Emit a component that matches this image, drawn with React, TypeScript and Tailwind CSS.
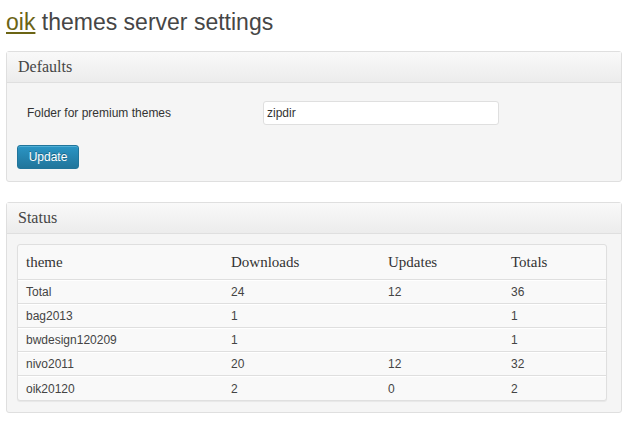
import React from "react";

const rows = [
  ["Total", "24", "12", "36"],
  ["bag2013", "1", "", "1"],
  ["bwdesign120209", "1", "", "1"],
  ["nivo2011", "20", "12", "32"],
  ["oik20120", "2", "0", "2"],
];

function Panel({ title, children }: { title: string; children: React.ReactNode }) {
  return (
    <div className="rounded-[3px] border border-[#dfdfdf] bg-[#f5f5f5] shadow-[inset_0_1px_0_#fff]">
      <div className="flex h-[31px] items-center border-b border-[#dfdfdf] bg-gradient-to-b from-[#f9f9f9] to-[#ececec] pl-[11px] pr-[10px] font-['Liberation_Serif',serif] text-[16px] text-[#464646]">
        {title}
      </div>
      {children}
    </div>
  );
}

export default function App() {
  return (
    <div className="min-h-screen bg-white pl-[6px] pr-[20px] font-['Liberation_Sans',Arial,sans-serif] text-[12px] text-[#333]">
      <h2 className="pt-[8px] text-[23px] leading-[29px] text-[#464646]">
        <a href="#" className="text-[#6b6414] underline">oik</a> themes server settings
      </h2>

      <div className="mt-[14px]">
        <Panel title="Defaults">
          <div className="px-[10px] pt-[18px] pb-[12px]">
            <div className="flex items-center">
              <label className="w-[246px] pl-[10px] text-[#333]">Folder for premium themes</label>
              <input
                defaultValue="zipdir"
                className="h-[24px] w-[236px] rounded-[3px] border border-[#dfdfdf] bg-white px-[3px] text-[12px] text-[#333] outline-none"
              />
            </div>
            <button className="mt-[20px] h-[24px] w-[62px] rounded-[3px] border border-[#21759b] bg-gradient-to-b from-[#2a95c5] to-[#21759b] text-[12px] text-white [text-shadow:0_-1px_0_rgba(0,0,0,0.3)] shadow-[inset_0_1px_0_rgba(120,200,230,0.5)]">
              Update
            </button>
          </div>
        </Panel>
      </div>

      <div className="mt-[20px]">
        <Panel title="Status">
          <div className="pt-[10px] pb-[11px] pl-[10px] pr-[14px]">
            <div className="rounded-[3px] border border-[#dfdfdf] bg-[#f9f9f9] shadow-[0_1px_1px_rgba(0,0,0,0.06)]">
              <div className="grid h-[35px] grid-cols-[205px_157px_123px_1fr] items-center border-b border-[#dfdfdf] font-['Liberation_Serif',serif] text-[15px] text-[#333]">
                <div className="pl-[8px]">theme</div>
                <div className="pl-[8px]">Downloads</div>
                <div className="pl-[8px]">Updates</div>
                <div className="pl-[8px]">Totals</div>
              </div>
              {rows.map((r, i) => (
                <div
                  key={r[0]}
                  className={
                    "grid h-[24px] grid-cols-[205px_157px_123px_1fr] items-center border-t border-white text-[#444] " +
                    (i < rows.length - 1 ? "border-b border-b-[#dfdfdf]" : "")
                  }
                >
                  {r.map((c, j) => (
                    <div key={j} className="pl-[8px]">
                      {c}
                    </div>
                  ))}
                </div>
              ))}
            </div>
          </div>
        </Panel>
      </div>
    </div>
  );
}
